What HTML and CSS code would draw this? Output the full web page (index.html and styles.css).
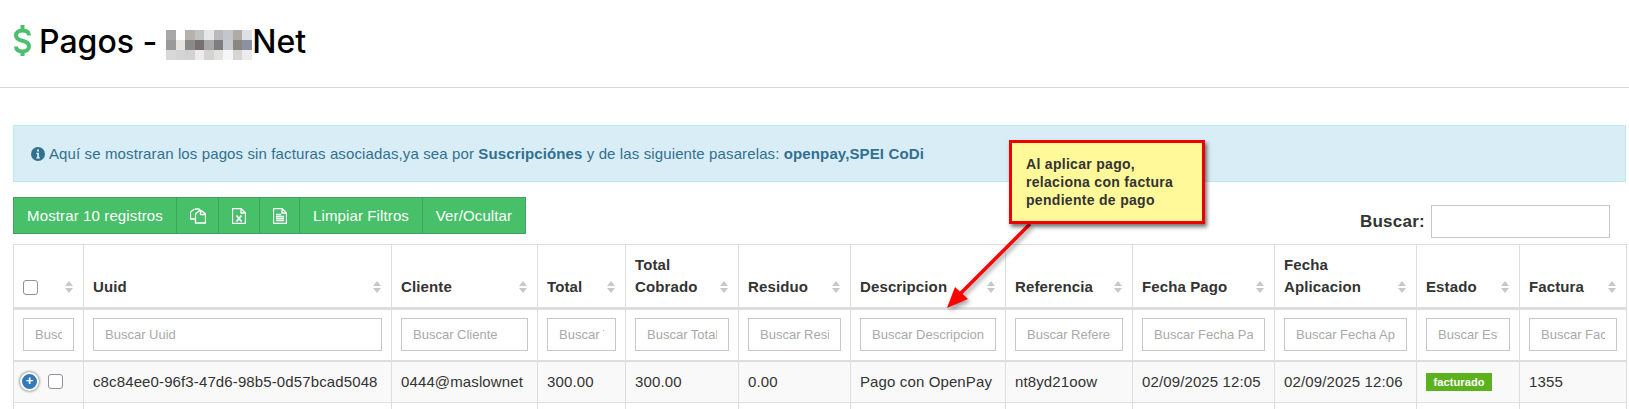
FILE: index.html
```html
<!DOCTYPE html>
<html lang="es">
<head>
<meta charset="utf-8">
<title>Pagos</title>
<link rel="stylesheet" href="styles.css">
</head>
<body>
<header class="page-head">
  <svg class="dollar" viewBox="0 0 17 31" aria-hidden="true"><path d="M15 10.5C15 7 12.200 5.500 8.500 5.500C4.600 5.500 2 7.500 2 10.500C2 14 5 15 8.500 15.800C12 16.600 15 18 15 21.500C15 24.500 12.200 26.500 8.500 26.500C5 26.500 2 25 2 21.500M8.500 0V5.500M8.500 26.500V31"/></svg>
  <h1 class="title">Pagos -
    <svg class="mosaic" viewBox="0 0 9 3" preserveAspectRatio="none" shape-rendering="crispEdges" aria-hidden="true">
      <rect x="0" y="0" width="1" height="1" fill="#a8a8a8"/><rect x="1" y="0" width="1" height="1" fill="#ffffff"/><rect x="2" y="0" width="1" height="1" fill="#b5b1ac"/><rect x="3" y="0" width="1" height="1" fill="#c2c2c2"/><rect x="4" y="0" width="1" height="1" fill="#e6e6e6"/><rect x="5" y="0" width="1" height="1" fill="#bababa"/><rect x="6" y="0" width="1" height="1" fill="#c3c6cb"/><rect x="7" y="0" width="1" height="1" fill="#b0aba7"/><rect x="8" y="0" width="1" height="1" fill="#dde1e6"/>
      <rect x="0" y="1" width="1" height="1" fill="#9a9a9a"/><rect x="1" y="1" width="1" height="1" fill="#e6e4df"/><rect x="2" y="1" width="1" height="1" fill="#8a8a8a"/><rect x="3" y="1" width="1" height="1" fill="#767070"/><rect x="4" y="1" width="1" height="1" fill="#a8a8a8"/><rect x="5" y="1" width="1" height="1" fill="#7d7d7d"/><rect x="6" y="1" width="1" height="1" fill="#c6c9ce"/><rect x="7" y="1" width="1" height="1" fill="#8a8783"/><rect x="8" y="1" width="1" height="1" fill="#8b92a3"/>
      <rect x="0" y="2" width="1" height="1" fill="#d8d8d8"/><rect x="1" y="2" width="1" height="1" fill="#d2d4d6"/><rect x="2" y="2" width="1" height="1" fill="#d2d2d2"/><rect x="3" y="2" width="1" height="1" fill="#ececec"/><rect x="4" y="2" width="1" height="1" fill="#d4d4d2"/><rect x="5" y="2" width="1" height="1" fill="#e2e2e2"/><rect x="6" y="2" width="1" height="1" fill="#f5f6f8"/><rect x="7" y="2" width="1" height="1" fill="#d6d5d3"/><rect x="8" y="2" width="1" height="1" fill="#ececec"/>
    </svg><span>Net</span></h1>
</header>

<main class="content">
  <div class="alert">
    <svg class="info" viewBox="0 0 14 14" aria-hidden="true"><circle cx="7" cy="7" r="7"/><rect class="info-i" x="6" y="2.500" width="2" height="2"/><path class="info-i" d="M5.300 5.800H8V10.300H9V11.500H5.300V10.300H6.200V7H5.300Z"/></svg>
    <span>Aquí se mostraran los pagos sin facturas asociadas,ya sea por <b>Suscripciónes</b> y de las siguiente pasarelas: <b>openpay,SPEI CoDi</b></span>
  </div>

  <div class="toolbar">
    <div class="btn-group">
      <button class="btn btn-first" type="button">Mostrar 10 registros</button>
      <button class="btn btn-icon btn-copy" type="button" aria-label="Copiar">
        <svg viewBox="0 0 16 15"><path d="M5 .5H9L11 2.500V4M.5 3.500L4.500 .5M.5 3.500V10.500H5"/><path d="M5.500 5.500L9 2.500H12L15.500 5.500V14.500H5.500ZM10.500 3V6H15"/></svg>
      </button>
      <button class="btn btn-icon btn-excel" type="button" aria-label="Excel">
        <svg viewBox="0 0 14 16"><path d="M.5 .5H9L13.500 5V15.500H.5ZM9 .5V5H13.500"/><path class="x-mark" d="M4.500 7.500L9.500 13.500M9.500 7.500L4.500 13.500"/></svg>
      </button>
      <button class="btn btn-icon btn-text" type="button" aria-label="Texto">
        <svg viewBox="0 0 14 16"><path d="M.5 .5H9L13.500 5V15.500H.5ZM9 .5V5H13.500"/><path d="M3 6.500H8M3 8.500H11M3 10.500H11M3 12.500H11"/></svg>
      </button>
      <button class="btn btn-limpiar" type="button">Limpiar Filtros</button>
      <button class="btn btn-ver" type="button">Ver/Ocultar</button>
    </div>
    <label class="search"><span>Buscar:</span><input type="text" class="search-input"></label>
  </div>

  <table class="grid">
    <colgroup>
      <col class="c1"><col class="c2"><col class="c3"><col class="c4"><col class="c5"><col class="c6"><col class="c7"><col class="c8"><col class="c9"><col class="c10"><col class="c11"><col class="c12">
    </colgroup>
    <thead>
      <tr class="head-row">
        <th><div class="th-in"><span class="chk chk-head"></span><i class="sort"></i></div></th>
        <th><div class="th-in"><span>Uuid</span><i class="sort"></i></div></th>
        <th><div class="th-in"><span>Cliente</span><i class="sort"></i></div></th>
        <th><div class="th-in"><span>Total</span><i class="sort"></i></div></th>
        <th><div class="th-in"><span>Total<br>Cobrado</span><i class="sort"></i></div></th>
        <th><div class="th-in"><span>Residuo</span><i class="sort"></i></div></th>
        <th><div class="th-in"><span>Descripcion</span><i class="sort"></i></div></th>
        <th><div class="th-in"><span>Referencia</span><i class="sort"></i></div></th>
        <th><div class="th-in"><span>Fecha Pago</span><i class="sort"></i></div></th>
        <th><div class="th-in"><span>Fecha<br>Aplicacion</span><i class="sort"></i></div></th>
        <th><div class="th-in"><span>Estado</span><i class="sort"></i></div></th>
        <th><div class="th-in"><span>Factura</span><i class="sort"></i></div></th>
      </tr>
      <tr class="filter-row">
        <th><input class="filter" placeholder="Buscar"></th>
        <th><input class="filter" placeholder="Buscar Uuid"></th>
        <th><input class="filter" placeholder="Buscar Cliente"></th>
        <th><input class="filter" placeholder="Buscar Total"></th>
        <th><input class="filter" placeholder="Buscar Total Cobrado"></th>
        <th><input class="filter" placeholder="Buscar Residuo"></th>
        <th><input class="filter" placeholder="Buscar Descripcion"></th>
        <th><input class="filter" placeholder="Buscar Referencia"></th>
        <th><input class="filter" placeholder="Buscar Fecha Pago"></th>
        <th><input class="filter" placeholder="Buscar Fecha Aplicacion"></th>
        <th><input class="filter" placeholder="Buscar Estado"></th>
        <th><input class="filter" placeholder="Buscar Factura"></th>
      </tr>
    </thead>
    <tbody>
      <tr class="data-row">
        <td><div class="sel"><span class="expand">+</span><span class="chk"></span></div></td>
        <td>c8c84ee0-96f3-47d6-98b5-0d57bcad5048</td>
        <td>0444@maslownet</td>
        <td>300.00</td>
        <td>300.00</td>
        <td>0.00</td>
        <td>Pago con OpenPay</td>
        <td>nt8yd21oow</td>
        <td>02/09/2025 12:05</td>
        <td>02/09/2025 12:06</td>
        <td><span class="badge">facturado</span></td>
        <td>1355</td>
      </tr>
      <tr class="next-row"><td></td><td></td><td></td><td></td><td></td><td></td><td></td><td></td><td></td><td></td><td></td><td></td></tr>
    </tbody>
  </table>
</main>

<svg class="arrow" viewBox="0 0 1629 409" aria-hidden="true"><path class="arrow-line" d="M1030 224L957 297"/><path class="arrow-head" d="M947 308L955 287L968 299Z"/></svg>
<div class="callout">Al aplicar pago,<br>relaciona con factura<br>pendiente de pago</div>
</body>
</html>
```

FILE: styles.css
```css
* { box-sizing: border-box; }
html, body { margin: 0; height: 409px; overflow: hidden; background: #fff; }
body { font-family: "Liberation Sans", Arial, sans-serif; font-size: 15px; color: #333; letter-spacing: .12px; position: relative; }

.page-head { height: 88px; border-bottom: 1px solid #d8d8d8; display: flex; align-items: flex-start; padding: 26px 0 0 14px; }
.dollar { width: 17px; height: 31px; margin: -1px 8px 0 0; flex: none; }
.dollar path { fill: none; stroke: #4bbf6b; stroke-width: 4; }
.title { margin: 0; font: 500 32px/31px Inter, "Liberation Sans", sans-serif; letter-spacing: 0; color: #000; display: flex; align-items: flex-start; white-space: pre; }
.mosaic { width: 86px; height: 30px; margin: 4px 0 0 9px; display: block; }

.content { padding: 37px 3px 0 13px; }
.alert { height: 57px; background: #d9edf7; border: 1px solid #bce8f1; color: #31708f; display: flex; align-items: center; gap: 4px; padding: 0 0 0 17px; }
.info { width: 14px; height: 14px; flex: none; }
.info circle { fill: #31708f; }
.info-i { fill: #d9edf7; }

.toolbar { display: flex; justify-content: space-between; align-items: flex-start; margin-top: 15px; height: 47px; }
.btn-group { display: flex; height: 37px; }
.btn { font: inherit; letter-spacing: inherit; color: #fff; background: #48bf69; border: 1px solid #3fa35d; border-left-width: 0; padding: 0; height: 37px; display: flex; align-items: center; justify-content: center; }
.btn-first { width: 164px; border-left-width: 1px; }
.btn-copy { width: 42px; }
.btn-excel { width: 41px; }
.btn-text { width: 40px; }
.btn-limpiar { width: 123px; }
.btn-ver { width: 103px; }
.btn svg { height: 16px; fill: none; stroke: #fff; stroke-width: 1.3; display: block; }
.btn svg .x-mark { stroke-width: 1.8; }
.btn-copy svg { width: 16px; }
.btn-excel svg, .btn-text svg { width: 14px; }

.search { display: flex; align-items: center; gap: 6px; margin: 8px 16px 0 0; font-weight: 700; font-size: 17px; letter-spacing: .25px; }
.search-input { width: 179px; height: 33px; border: 1px solid #c4c8c8; background: #fff; }

.grid { border-collapse: collapse; table-layout: fixed; width: 1613px; }
.c1 { width: 70px; } .c2 { width: 308px; } .c3 { width: 146px; } .c4 { width: 88px; }
.c5 { width: 113px; } .c6 { width: 112px; } .c7 { width: 155px; } .c8 { width: 127px; }
.c9 { width: 142px; } .c10 { width: 142px; } .c11 { width: 103px; } .c12 { width: 107px; }
.grid th, .grid td { border: 1px solid #ddd; text-align: left; padding: 0 9px; white-space: nowrap; overflow: hidden; }

.head-row { height: 64px; }
.head-row th { border-bottom: 3px solid #ddd; vertical-align: bottom; padding-bottom: 9px; line-height: 22px; font-weight: 700; }
.th-in { display: flex; justify-content: space-between; align-items: flex-end; }
.sort { display: block; width: 9px; height: 12px; margin: 0 0 5px 0; flex: none; position: relative; }
.sort::before, .sort::after { content: ""; position: absolute; left: 0; border-left: 4.5px solid transparent; border-right: 4.5px solid transparent; }
.sort::before { top: 0; border-bottom: 5px solid #c8c8c8; }
.sort::after { bottom: 0; border-top: 5px solid #c8c8c8; }
.chk { display: block; width: 15px; height: 15px; border: 1px solid #8f8f9d; border-radius: 3px; background: #fff; flex: none; }
.chk-head { margin: 0 0 3px 0; }

.filter-row { height: 52px; }
.filter-row th { border-bottom: 2px solid #ddd; font-weight: 400; }
.filter { width: 100%; height: 33px; display: block; border: 1px solid #c4c8c8; padding: 0 11px; font: 13px "Liberation Sans", sans-serif; letter-spacing: 0; background: #fff; }
.filter::placeholder { color: #a9a9a9; opacity: 1; }

.data-row { height: 42px; }
.data-row td { background: #f9f9f9; }
.sel { display: flex; align-items: center; gap: 9px; margin-left: -3px; }
.expand { width: 19px; height: 19px; flex: none; border-radius: 50%; background: #337ab7; border: 2.500px solid #fff; box-shadow: 0 0 3px #444; color: #fff; font: 700 13px/13px "Liberation Sans", sans-serif; text-align: center; }
.badge { display: inline-block; width: 66px; height: 18px; background: #5cb21e; color: #fff; font-size: 11px; font-weight: 700; line-height: 18px; text-align: center; vertical-align: middle; }
.next-row { height: 20px; }

.arrow { position: absolute; left: 0; top: 0; width: 1629px; height: 409px; pointer-events: none; filter: drop-shadow(2px 3px 2px rgba(0,0,0,.35)); }
.arrow-line { fill: none; stroke: #f00; stroke-width: 3.5; }
.arrow-head { fill: #f00; }
.callout { position: absolute; left: 1009px; top: 140px; width: 196px; height: 84px; background: #fff999; border: 3px solid #e00; box-shadow: 2px 3px 4px rgba(0,0,0,.55); padding: 12px 14px; font-size: 14px; font-weight: 700; line-height: 18px; letter-spacing: .3px; white-space: nowrap; }
```
